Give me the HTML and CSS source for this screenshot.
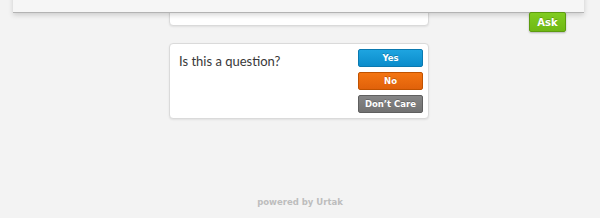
FILE: index.html
```html
<!DOCTYPE html>
<html lang="en">
<head>
<meta charset="UTF-8" />
<title>Urtak</title>
<link rel="stylesheet" href="styles.css">
</head>
<body>
<header class="topbar">
  <button class="btn btn-ask">Ask</button>
</header>
<main class="column">
  <section class="card card-prev"></section>
  <section class="card question">
    <p class="question-text">Is this a question?</p>
    <div class="answers">
      <button class="btn btn-yes">Yes</button>
      <button class="btn btn-no">No</button>
      <button class="btn btn-care">Don&rsquo;t Care</button>
    </div>
  </section>
</main>
<footer class="powered">powered by Urtak</footer>
</body>
</html>
```

FILE: styles.css
```css
*, *::before, *::after {
  box-sizing: border-box;
}

html, body {
  margin: 0;
  height: 100%;
  background: #f3f3f3;
  font-family: "Open Sans", "DejaVu Sans", sans-serif;
}

body {
  display: flex;
  flex-direction: column;
}

/* Header bar overlaying the stream */
.topbar {
  position: absolute;
  top: -20px;
  left: 13px;
  width: 571px;
  height: 33px;
  background: #f6f6f6;
  border-bottom: 1px solid #b3b3b3;
  box-shadow: 0 2px 5px rgba(0,0,0,0.16);
  z-index: 10;
}

.btn {
  display: block;
  border: 1px solid;
  border-radius: 2px;
  color: #fff;
  font-family: "DejaVu Sans", sans-serif;
  font-weight: bold;
  font-size: 8.5px;
  padding: 0;
  text-shadow: 0 -1px 0 rgba(0,0,0,0.2);
  cursor: pointer;
}

.btn-ask {
  position: absolute;
  top: 32px;
  left: 516px;
  width: 37px;
  height: 20px;
  font-size: 10px;
  background: linear-gradient(#80cc20, #6fb814);
  border-color: #5c9b0f;
  box-shadow: 0 1px 2px rgba(0,0,0,0.25);
  z-index: -1;
}

/* Stream column */
.column {
  width: 260px;
  margin-left: 169px;
  display: flex;
  flex-direction: column;
  gap: 17px;
}

.card {
  background: #fff;
  border: 1px solid #dadada;
  border-radius: 4px;
  box-shadow: 0 1px 2px rgba(0,0,0,0.08);
}

.card-prev {
  height: 46px;
  margin-top: -20px;
}

.question {
  height: 76px;
  display: flex;
  justify-content: space-between;
  padding: 5px 5px 0 9px;
}

.question-text {
  margin: 4px 0 0;
  font-family: Lato, "Open Sans", sans-serif;
  font-size: 13px;
  color: #383838;
}

.answers {
  display: flex;
  flex-direction: column;
  gap: 5px;
}

.answers .btn {
  width: 65px;
  height: 18px;
}

.btn-yes {
  background: linear-gradient(#1ea4e0, #0b8ccb);
  border-color: #0a79b0;
}

.btn-no {
  background: linear-gradient(#f47512, #e0610a);
  border-color: #c05200;
}

.btn-care {
  background: linear-gradient(#858585, #727272);
  border-color: #5f5f5f;
}

.powered {
  margin-top: auto;
  padding-bottom: 11px;
  text-align: center;
  font-family: "DejaVu Sans", sans-serif;
  font-weight: bold;
  font-size: 8.5px;
  color: #bdbdbd;
}
```
